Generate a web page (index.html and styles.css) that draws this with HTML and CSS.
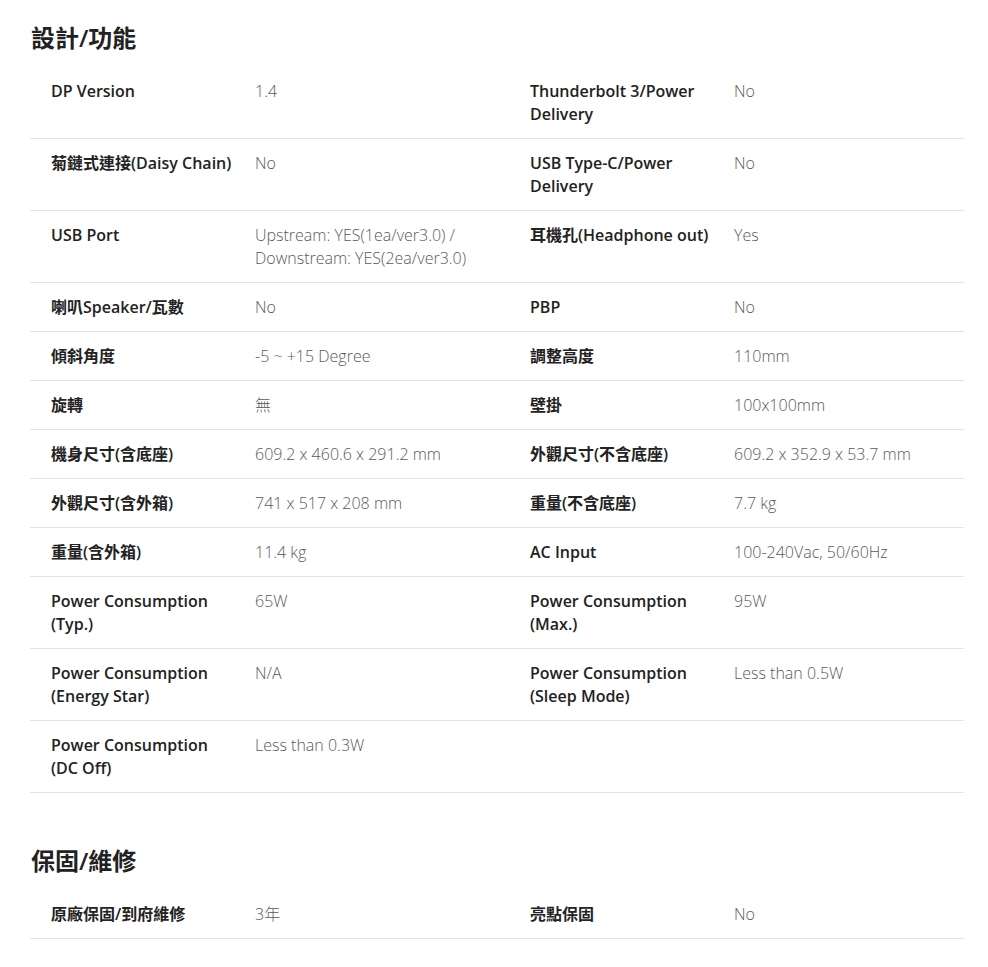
FILE: index.html
```html
<html lang="zh-Hant">
  <head>
    <meta charset="UTF-8" />
    <meta name="viewport" content="width=device-width, initial-scale=1.0" />
    <title>規格</title>
    <link rel="stylesheet" href="styles.css">
  </head>
  <body>
    <div class="specs">
      <section class="spec-group">
        <h2>設計/功能</h2>
        <div class="spec-row">
          <div class="label">DP Version</div>
          <div class="value">1.4</div>
          <div class="label">Thunderbolt 3/Power Delivery</div>
          <div class="value">No</div>
        </div>
        <div class="spec-row">
          <div class="label">菊鏈式連接(Daisy Chain)</div>
          <div class="value">No</div>
          <div class="label">USB Type-C/Power Delivery</div>
          <div class="value">No</div>
        </div>
        <div class="spec-row">
          <div class="label">USB Port</div>
          <div class="value">Upstream: YES(1ea/ver3.0) / Downstream: YES(2ea/ver3.0)</div>
          <div class="label">耳機孔(Headphone out)</div>
          <div class="value">Yes</div>
        </div>
        <div class="spec-row">
          <div class="label">喇叭Speaker/瓦數</div>
          <div class="value">No</div>
          <div class="label">PBP</div>
          <div class="value">No</div>
        </div>
        <div class="spec-row">
          <div class="label">傾斜角度</div>
          <div class="value">-5 ~ +15 Degree</div>
          <div class="label">調整高度</div>
          <div class="value">110mm</div>
        </div>
        <div class="spec-row">
          <div class="label">旋轉</div>
          <div class="value">無</div>
          <div class="label">壁掛</div>
          <div class="value">100x100mm</div>
        </div>
        <div class="spec-row">
          <div class="label">機身尺寸(含底座)</div>
          <div class="value">609.2 x 460.6 x 291.2 mm</div>
          <div class="label">外觀尺寸(不含底座)</div>
          <div class="value">609.2 x 352.9 x 53.7 mm</div>
        </div>
        <div class="spec-row">
          <div class="label">外觀尺寸(含外箱)</div>
          <div class="value">741 x 517 x 208 mm</div>
          <div class="label">重量(不含底座)</div>
          <div class="value">7.7 kg</div>
        </div>
        <div class="spec-row">
          <div class="label">重量(含外箱)</div>
          <div class="value">11.4 kg</div>
          <div class="label">AC Input</div>
          <div class="value">100-240Vac, 50/60Hz</div>
        </div>
        <div class="spec-row">
          <div class="label">Power Consumption (Typ.)</div>
          <div class="value">65W</div>
          <div class="label">Power Consumption (Max.)</div>
          <div class="value">95W</div>
        </div>
        <div class="spec-row">
          <div class="label">Power Consumption (Energy Star)</div>
          <div class="value">N/A</div>
          <div class="label">Power Consumption (Sleep Mode)</div>
          <div class="value">Less than 0.5W</div>
        </div>
        <div class="spec-row">
          <div class="label">Power Consumption (DC Off)</div>
          <div class="value">Less than 0.3W</div>
        </div>
      </section>

      <section class="spec-group">
        <h2>保固/維修</h2>
        <div class="spec-row">
          <div class="label">原廠保固/到府維修</div>
          <div class="value">3年</div>
          <div class="label">亮點保固</div>
          <div class="value">No</div>
        </div>
      </section>
    </div>
  </body>
</html>
```

FILE: styles.css
```css
body {
  margin: 0;
  background: white;
  color: #222;
  font-family: "Open Sans", "Noto Sans CJK TC", sans-serif;
  font-size: 16px;
}
.specs {
  padding: 22px 24px 0 30px;
}
.spec-group + .spec-group {
  margin-top: 52px;
}
h2 {
  margin: 0 0 13px;
  padding-left: 1px;
  font-size: 24px;
  line-height: 32px;
  font-weight: 600;
  color: #222;
}
.spec-row {
  display: grid;
  grid-template-columns: 186px 257px 186px 1fr;
  column-gap: 18px;
  padding: 13px 0 12px 21px;
  border-bottom: 1px solid #e3e3e3;
  line-height: 23px;
}
.label {
  font-weight: 600;
  color: #222;
}
.value {
  font-weight: 300;
  color: #5a5a5a;
}
```
